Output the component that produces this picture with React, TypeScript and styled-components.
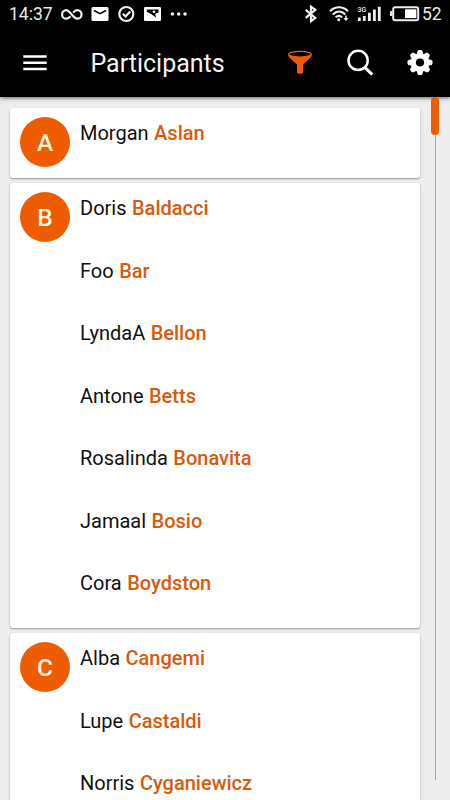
import React from 'react';
import styled, { createGlobalStyle } from 'styled-components';

const ORANGE = '#ef5c00';

const GlobalStyle = createGlobalStyle`
  * { box-sizing: border-box; }
  html, body { margin: 0; padding: 0; background: #ededed; }
  body { font-family: Roboto, "Liberation Sans", sans-serif; overflow: hidden; }
  svg { display: block; flex: none; }
`;

const Screen = styled.div`
  width: 450px;
  height: 800px;
  overflow: hidden;
  display: flex;
  flex-direction: column;
  background: #ededed;
`;

const Header = styled.header`
  flex: none;
  height: 97px;
  background: #000;
  color: #fff;
  box-shadow: 0 1px 4px rgba(0, 0, 0, 0.6);
`;

const StatusBar = styled.div`
  height: 28px;
  padding: 0 8px 0 9px;
  display: flex;
  justify-content: space-between;
  align-items: center;
`;

const StatusGroup = styled.div`
  display: flex;
  align-items: center;
`;

const StatusText = styled.span<{ $width: number }>`
  width: ${(p) => p.$width}px;
  font-size: 17.5px;
  line-height: 28px;
  white-space: nowrap;
  color: #e8e8e8;
`;

const Toolbar = styled.div`
  height: 69px;
  display: flex;
  align-items: center;
  padding: 0 17px 0 23px;
`;

const Title = styled.h1`
  flex: 1;
  margin: 2px 0 0 43.4px;
  font-size: 25px;
  line-height: 30px;
  font-weight: 400;
  color: #f4f4f4;
`;

const IconButton = styled.button`
  padding: 0;
  border: 0;
  background: none;
`;

const Actions = styled.div`
  display: flex;
  align-items: center;
  gap: 33px;
`;

const Content = styled.main`
  flex: 1;
  min-height: 0;
  display: flex;
`;

const List = styled.div`
  width: 410.4px;
  margin-left: 10px;
  padding-top: 11px;
  display: flex;
  flex-direction: column;
  gap: 5px;
`;

const Card = styled.section`
  flex: none;
  display: flex;
  padding: 0 10px 7.5px;
  background: #fff;
  border-radius: 3px;
  box-shadow: 0 1px 2px rgba(0, 0, 0, 0.38);
`;

const Badge = styled.div`
  width: 50px;
  height: 50px;
  margin-top: 9.4px;
  border-radius: 50%;
  background: ${ORANGE};
  color: #fff4dc;
  font-size: 24.5px;
  font-weight: 500;
  line-height: 52px;
  text-align: center;
`;

const Names = styled.ul`
  list-style: none;
  margin: 0 0 0 10px;
  padding: 0;
`;

const Person = styled.li`
  height: 62.5px;
  padding-top: 13px;
  font-size: 20px;
  line-height: 24px;
  word-spacing: 0.5px;
  color: #111;
  white-space: nowrap;
`;

const Surname = styled.span`
  font-weight: 500;
  color: #d85b0b;
`;

const ScrollTrack = styled.div`
  width: 8px;
  height: 683px;
  margin-left: 10.6px;
  background: linear-gradient(#a8a8a8, #a8a8a8) 4px 0 / 1px 100% no-repeat;
`;

const ScrollThumb = styled.div`
  position: relative;
  height: 38px;
  border-radius: 4px;
  background: ${ORANGE};
`;

const groups = [
  { letter: 'A', people: [['Morgan', 'Aslan']] },
  {
    letter: 'B',
    people: [
      ['Doris', 'Baldacci'],
      ['Foo', 'Bar'],
      ['LyndaA', 'Bellon'],
      ['Antone', 'Betts'],
      ['Rosalinda', 'Bonavita'],
      ['Jamaal', 'Bosio'],
      ['Cora', 'Boydston'],
    ],
  },
  {
    letter: 'C',
    people: [
      ['Alba', 'Cangemi'],
      ['Lupe', 'Castaldi'],
      ['Norris', 'Cyganiewicz'],
    ],
  },
];

/* Notification icons, spanning x 60 to 190 of the status bar */
const NotificationIcons = () => (
  <svg width="130" height="28" viewBox="60 0 130 28" fill="none" stroke="#eee" strokeWidth="2.2">
    <path d="M70.5 16.2C68.8 18.2 67.8 18.7 66.4 18.7a4.2 4.2 0 0 1 0-8.6c3.4 0 7 8.6 10.8 8.6a4.2 4.2 0 0 0 0-8.6c-1.5 0-2.6.7-4 2.5" />
    <rect x="91.5" y="7" width="17" height="14" rx="1.5" fill="#fff" stroke="none" />
    <path d="M94 10.5l6 3.2 6-3.2" stroke="#000" strokeWidth="1.5" />
    <circle cx="126.3" cy="14" r="7" />
    <path d="M122.8 13.7l2.8 2.8 4.6-5" />
    <rect x="144" y="7" width="17" height="14" rx="1.3" fill="#fff" stroke="none" />
    <path d="M146.8 9.6h11.7v3l-3.4 1.2 1 3.8-5-3.6-4.3-2.2z" fill="#000" stroke="none" />
    <circle cx="154" cy="11.7" r="1.3" fill="#fff" stroke="none" />
    <g fill="#eee" stroke="none">
      <circle cx="172.4" cy="14" r="1.8" />
      <circle cx="178.7" cy="14" r="1.8" />
      <circle cx="185" cy="14" r="1.8" />
    </g>
  </svg>
);

/* Connectivity and battery icons, spanning x 303 to 422 of the status bar */
const SystemIcons = () => (
  <svg width="119" height="28" viewBox="303 0 119 28" fill="none" stroke="#eee" strokeWidth="2">
    <path d="M305.7 9.9l9.6 8-4.3 3.2V6.7l4.3 3.2-9.6 8" strokeWidth="2.2" />
    <path d="M330 11.2c5.3-5.2 12.7-5.2 18 0M332.7 14.4c4-3.8 8.8-3.8 12.6 0M335.6 17.3c2.2-1.8 4.5-1.8 6.5 0" strokeWidth="2.1" />
    <circle cx="338.7" cy="19.8" r="1.5" fill="#eee" stroke="none" />
    <path d="M346 15.5v4" strokeWidth="1.5" />
    <path d="M343.5 18h5L346 21z" fill="#eee" stroke="none" />
    <text x="357.4" y="12" fontSize="7" fontWeight="500" fill="#eee" stroke="none" fontFamily="Roboto, sans-serif" textLength="9">3G</text>
    <path d="M359.3 17.5V21M364.3 16V21M369.4 12.7V21M374.4 9.5V21M379.3 6.7V21" strokeWidth="2.8" />
    <rect x="393.2" y="7.2" width="25" height="13" rx="2" />
    <path d="M392 11.5h-1.5v4h1.5z" fill="#eee" strokeWidth="1" />
    <rect x="405" y="9.3" width="11.4" height="8.8" fill="#fff" stroke="none" />
  </svg>
);

const MenuIcon = () => (
  <svg width="24" height="16" viewBox="0 0 24 16" fill="#fff">
    <path d="M.3.3H23.7V2.8H.3zM.3 6.5H23.7V9H.3zM.3 12.7H23.7v2.5H.3z" />
  </svg>
);

const FunnelIcon = () => (
  <svg width="26" height="26" viewBox="0 0 26 26">
    <path d="M1.2 4.2c0 2 1 3.2 2.3 4.4l6.5 6V23c1 1 5 1 6 0v-8.4l6.5-6c1.3-1.2 2.3-2.4 2.3-4.4z" fill={ORANGE} />
    <ellipse cx="13" cy="4.2" rx="11.2" ry="2.9" fill="#000" stroke={ORANGE} strokeWidth="1.3" />
  </svg>
);

const SearchIcon = () => (
  <svg width="28" height="28" viewBox="0 0 28 28" fill="none" stroke="#fff">
    <circle cx="12.1" cy="11.4" r="9.6" strokeWidth="2.5" />
    <path d="M18.8 18.2l7.4 7.4" strokeWidth="3" />
  </svg>
);

const GearIcon = () => (
  <svg width="26" height="26" viewBox="-13 -12.5 26 26">
    <circle r="6.7" fill="none" stroke="#fff" strokeWidth="5.2" />
    {[0, 45, 90, 135, 180, 225, 270, 315].map((angle) => (
      <path key={angle} d="M-3.4-8.2L-2.2-12Q0-13.2 2.2-12L3.4-8.2z" fill="#fff" transform={`rotate(${angle})`} />
    ))}
  </svg>
);

export default function App() {
  return (
    <Screen>
      <GlobalStyle />
      <Header>
        <StatusBar>
          <StatusGroup>
            <StatusText $width={51}>14:37</StatusText>
            <NotificationIcons />
          </StatusGroup>
          <StatusGroup>
            <SystemIcons />
            <StatusText $width={20}>52</StatusText>
          </StatusGroup>
        </StatusBar>
        <Toolbar>
          <IconButton aria-label="Menu">
            <MenuIcon />
          </IconButton>
          <Title>Participants</Title>
          <Actions>
            <IconButton aria-label="Filter">
              <FunnelIcon />
            </IconButton>
            <IconButton aria-label="Search">
              <SearchIcon />
            </IconButton>
            <IconButton aria-label="Settings">
              <GearIcon />
            </IconButton>
          </Actions>
        </Toolbar>
      </Header>
      <Content>
        <List>
          {groups.map(({ letter, people }) => (
            <Card key={letter}>
              <Badge>{letter}</Badge>
              <Names>
                {people.map(([first, last]) => (
                  <Person key={last}>
                    {first} <Surname>{last}</Surname>
                  </Person>
                ))}
              </Names>
            </Card>
          ))}
        </List>
        <ScrollTrack>
          <ScrollThumb />
        </ScrollTrack>
      </Content>
    </Screen>
  );
}
